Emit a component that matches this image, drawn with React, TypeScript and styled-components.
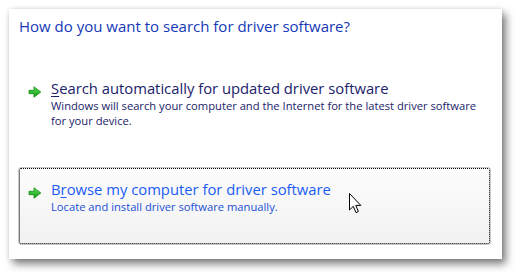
import React from 'react';
import styled, { createGlobalStyle } from 'styled-components';

const GlobalStyle = createGlobalStyle`
  html, body {
    margin: 0;
    padding: 0;
    background: #ffffff;
  }
  body {
    font-family: 'Open Sans', 'Noto Sans', sans-serif;
  }
`;

const Page = styled.div`
  width: 516px;
  height: 273px;
  padding: 9px 14px 15px 9px;
  box-sizing: border-box;
`;

const Panel = styled.div`
  position: relative;
  width: 493px;
  height: 250px;
  background: #ffffff;
  box-shadow: 4px 5px 8px rgba(0, 0, 0, 0.5), 0 0 4px rgba(0, 0, 0, 0.12);
  display: flex;
  flex-direction: column;
  padding: 0 11px 0 9px;
  box-sizing: border-box;
`;

const Title = styled.h1`
  margin: 0;
  padding: 7px 0 0 1px;
  font-size: 15px;
  font-weight: 400;
  line-height: 20px;
  color: #1538b8;
  height: 57px;
  box-sizing: border-box;
`;

const LinkList = styled.div`
  display: flex;
  flex-direction: column;
  gap: 23px;
`;

const LinkBox = styled.div<{ $hover?: boolean }>`
  position: relative;
  height: 78px;
  box-sizing: border-box;
  display: flex;
  gap: 9px;
  padding: 11px 0 0 9px;
  border-radius: 3px;
  border: 1px solid ${(p) => (p.$hover ? '#c6c6c6' : 'transparent')};
  background: ${(p) =>
    p.$hover ? 'linear-gradient(#fdfdfd, #f7f7f7 50%, #f1f1f1)' : 'transparent'};
  outline: ${(p) => (p.$hover ? '1px dotted #000000' : 'none')};
  outline-offset: -2px;
`;

const ArrowWrap = styled.div`
  width: 14px;
  height: 12px;
  margin-top: 3px;
  flex: none;
`;

const Texts = styled.div`
  display: flex;
  flex-direction: column;
`;

const LinkTitle = styled.div<{ $hover?: boolean }>`
  font-size: 14.8px;
  line-height: 20px;
  color: ${(p) => (p.$hover ? '#1a5cf5' : '#1a226a')};
  u {
    text-decoration-thickness: 1px;
    text-underline-offset: 2px;
  }
`;

const LinkNote = styled.div<{ $hover?: boolean }>`
  font-size: 11.2px;
  line-height: 15px;
  color: ${(p) => (p.$hover ? '#1a4fd8' : '#1a226a')};
`;

const Cursor = styled.svg`
  position: absolute;
  left: 340px;
  top: 184px;
`;

const GreenArrow = () => (
  <svg width="14" height="12" viewBox="0 0 14 12">
    <defs>
      <linearGradient id="ga" x1="0" y1="0" x2="0" y2="1">
        <stop offset="0" stopColor="#5ee05e" />
        <stop offset="1" stopColor="#109a10" />
      </linearGradient>
    </defs>
    <path
      d="M1 4.3 H6 V0.8 L12.8 6 L6 11.2 V7.7 H1 Z"
      fill="url(#ga)"
      stroke="#0e8a0e"
      strokeWidth="0.8"
      strokeLinejoin="round"
    />
  </svg>
);

interface CommandLinkProps {
  title: React.ReactNode;
  note: string;
  hover?: boolean;
}

const CommandLink = ({ title, note, hover }: CommandLinkProps) => (
  <LinkBox $hover={hover}>
    <ArrowWrap>
      <GreenArrow />
    </ArrowWrap>
    <Texts>
      <LinkTitle $hover={hover}>{title}</LinkTitle>
      <LinkNote $hover={hover}>{note}</LinkNote>
    </Texts>
  </LinkBox>
);

export default function App() {
  return (
    <Page>
      <GlobalStyle />
      <Panel>
        <Title>How do you want to search for driver software?</Title>
        <LinkList>
          <CommandLink
            title={
              <>
                <u>S</u>earch automatically for updated driver software
              </>
            }
            note="Windows will search your computer and the Internet for the latest driver software for your device."
          />
          <CommandLink
            hover
            title={
              <>
                B<u>r</u>owse my computer for driver software
              </>
            }
            note="Locate and install driver software manually."
          />
        </LinkList>
        <Cursor width="13" height="21" viewBox="0 0 13 21">
          <path
            d="M0.5 0.5 V17 L4.3 13.3 L7 19.6 L9.4 18.6 L6.8 12.4 H11.8 Z"
            fill="#ffffff"
            stroke="#000000"
            strokeWidth="1"
            strokeLinejoin="miter"
          />
        </Cursor>
      </Panel>
    </Page>
  );
}
